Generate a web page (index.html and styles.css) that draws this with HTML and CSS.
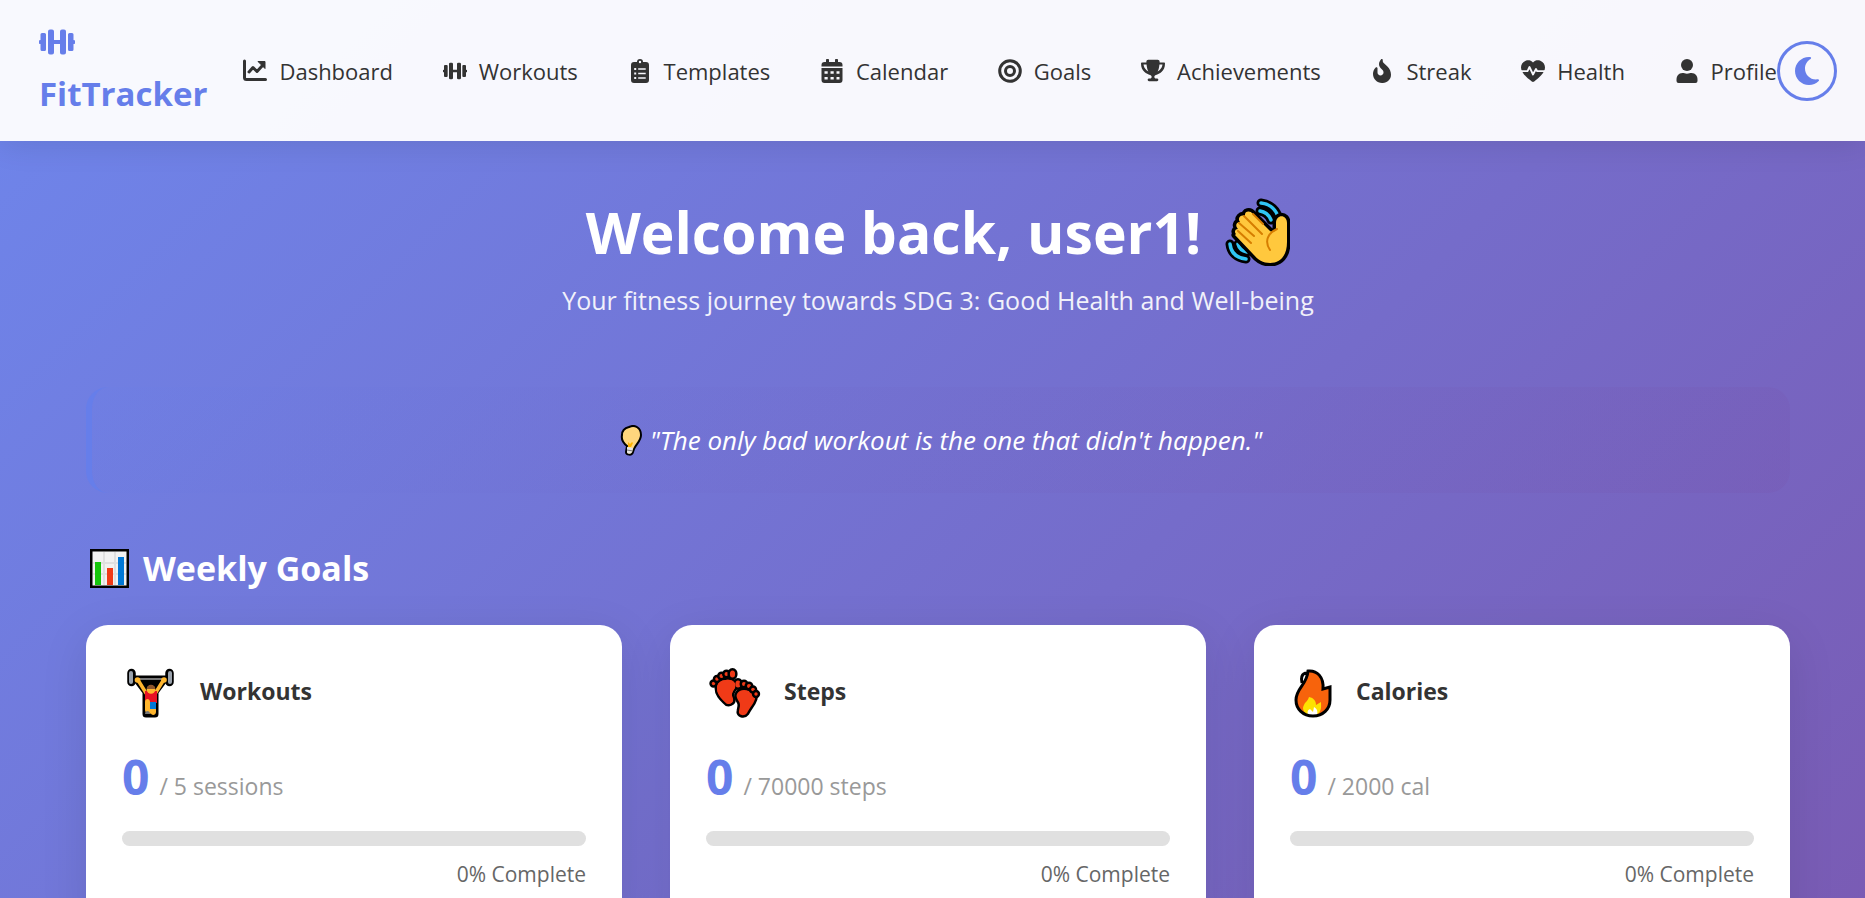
FILE: index.html
```html
<!DOCTYPE html>
<html lang="en">
<head>
<meta charset="utf-8">
<meta name="viewport" content="width=device-width, initial-scale=1">
<title>FitTracker</title>
<link rel="stylesheet" href="styles.css">
</head>
<body>
<svg class="defs" aria-hidden="true">
  <symbol id="dumbbell" viewBox="0 0 36 36">
    <path d="M9 7.500a2 2 0 0 1 2-2h2a2 2 0 0 1 2 2V16h6V7.500a2 2 0 0 1 2-2h2a2 2 0 0 1 2 2v21a2 2 0 0 1-2 2h-2a2 2 0 0 1-2-2V20h-6v8.500a2 2 0 0 1-2 2h-2a2 2 0 0 1-2-2zM1.500 16v-5.500a1.500 1.500 0 0 1 1.500-1.500h2.500a1.500 1.500 0 0 1 1.500 1.500v15a1.500 1.500 0 0 1-1.500 1.500h-2.500a1.500 1.500 0 0 1-1.500-1.500V20a2 2 0 0 1 0-4zM34.500 16v-5.500a1.500 1.500 0 0 0-1.500-1.500h-2.500a1.500 1.500 0 0 0-1.500 1.500v15a1.500 1.500 0 0 0 1.500 1.500h2.500a1.500 1.500 0 0 0 1.500-1.500V20a2 2 0 0 0 0-4z"/>
  </symbol>
</svg>

<header class="navbar">
  <a class="logo" href="#">
    <svg class="logo-icon" aria-hidden="true"><use href="#dumbbell"/></svg>
    <span>FitTracker</span>
  </a>
  <nav class="menu">
    <a href="#"><svg class="icon" viewBox="0 0 24 24" aria-hidden="true"><path d="M1.500 2v16.500a2 2 0 0 0 2 2H22.500" fill="none" stroke="currentColor" stroke-width="3" stroke-linecap="round"/><path d="M6 13l4-4.500 4 4L19.500 6.500" fill="none" stroke="currentColor" stroke-width="3" stroke-linecap="round" stroke-linejoin="round"/><path d="M15 2.500h7v7z" fill="currentColor" stroke="currentColor" stroke-linejoin="round"/></svg>Dashboard</a>
    <a href="#"><svg class="icon" aria-hidden="true"><use href="#dumbbell"/></svg>Workouts</a>
    <a href="#"><svg class="icon" viewBox="0 0 24 24" aria-hidden="true"><path fill-rule="evenodd" d="M6 3h3a3 3 0 0 1 6 0h3a3 3 0 0 1 3 3v15a3 3 0 0 1-3 3H6a3 3 0 0 1-3-3V6a3 3 0 0 1 3-3zm6-1.200a1.200 1.200 0 1 0 0 2.400 1.200 1.200 0 0 0 0-2.400zM6.200 9h2v2h-2zm4 .2h7.500v1.500h-7.500zM6.200 13.500h2v2h-2zm4 .2h7.500v1.500h-7.500zM6.200 18h2v2h-2zm4 .2h7.500v1.500h-7.500z"/></svg>Templates</a>
    <a href="#"><svg class="icon" viewBox="0 0 24 24" aria-hidden="true"><path fill-rule="evenodd" d="M6 1.200a1.500 1.500 0 0 1 3 0V3h6V1.200a1.500 1.500 0 0 1 3 0V3h1.500a3 3 0 0 1 3 3v1.500h-21V6a3 3 0 0 1 3-3H6zM1.500 9h21v12a3 3 0 0 1-3 3h-15a3 3 0 0 1-3-3zM4.500 12.200v2.600h3.200v-2.600zm6 0v2.600h3.200v-2.600zm6 0v2.600h3v-2.600zM4.500 18v2.600h3.200V18zm6 0v2.600h3.200V18zm6 0v2.600h3V18z"/></svg>Calendar</a>
    <a href="#"><svg class="icon" viewBox="0 0 24 24" aria-hidden="true"><g fill="none" stroke="currentColor" stroke-width="3"><circle cx="12" cy="12" r="10.300"/><circle cx="12" cy="12" r="4.500"/></g></svg>Goals</a>
    <a href="#"><svg class="icon" viewBox="0 -20 576 576" aria-hidden="true"><path d="M400 0H176c-26.500 0-48.100 21.800-47.100 48.200c.2 5.300 .4 10.600 .7 15.800H24C10.700 64 0 74.700 0 88c0 92.600 33.500 157 78.500 200.700c44.300 43.100 98.300 64.800 138.100 75.800c23.400 6.500 39.400 26 39.400 45.600c0 20.900-17 37.900-37.900 37.900H192c-17.700 0-32 14.300-32 32s14.300 32 32 32H384c17.700 0 32-14.300 32-32s-14.300-32-32-32H357.900C337 448 320 431 320 410.100c0-19.600 15.900-39.200 39.400-45.600c39.900-11 93.900-32.700 138.200-75.800C542.500 245 576 180.600 576 88c0-13.300-10.700-24-24-24H446.400c.3-5.200 .5-10.400 .7-15.800C448.100 21.800 426.500 0 400 0zM60 112h73.300c8 80 24 130 44 165c-20-10-36-20-50-35c-35-33-58-70-67.300-130zM448.700 242c-14 15-30 25-50 35c20-35 36-85 44-165H516c-9.300 60-32.300 97-67.300 130z"/></svg>Achievements</a>
    <a href="#"><svg class="icon" viewBox="0 0 384 512" aria-hidden="true"><path d="M153.600 29.900l16-21.300C173.600 3.200 180 0 186.700 0C198.400 0 208 9.600 208 21.300V43.500c0 13.100 5.400 25.700 14.900 34.700L307.600 159C356.400 205.600 384 270.200 384 337.700C384 434 306 512 209.700 512H192C86 512 0 426 0 320v-3.800c0-48.800 19.400-95.600 53.900-130.100l3.500-3.500c4.200-4.200 10-6.600 16-6.600C85.900 176 96 186.100 96 198.600V288c0 35.300 28.700 64 64 64s64-28.700 64-64v-3.900c0-18-7.200-35.300-19.900-48l-38.600-38.600c-24-24-37.500-56.700-37.500-90.700c0-27.700 9-54.800 25.600-76.900z"/></svg>Streak</a>
    <a href="#"><svg class="icon" viewBox="0 0 24 24" aria-hidden="true"><path d="M12 3.500C14 1.200 17 .9 19.300 1.800 22.500 3 24 6 24 8.500c0 5-6 10.500-10.800 14a2 2 0 0 1-2.400 0C6 19 0 13.500 0 8.500 0 6 1.500 3 4.700 1.800 7 .9 10 1.200 12 3.500z"/><path d="M0 12.200h6.500l2-4.200 3.500 7.500 3-5.500 1.200 2.200H24" fill="none" stroke="#f9f9fd" stroke-width="1.800" stroke-linejoin="round"/></svg>Health</a>
    <a href="#"><svg class="icon" viewBox="0 0 24 24" aria-hidden="true"><circle cx="12" cy="6" r="6"/><path d="M7.500 14c1.500 0 2.500.7 4.500.7s3-.7 4.500-.7c4 0 6 3 6 6.500v1.500a2 2 0 0 1-2 2h-17a2 2 0 0 1-2-2v-1.500c0-3.500 2-6.500 6-6.500z"/></svg>Profile</a>
  </nav>
  <button class="theme-toggle" type="button" aria-label="Toggle dark mode"><svg viewBox="0 0 384 512" aria-hidden="true"><path d="M223.500 32C100 32 0 132.300 0 256S100 480 223.500 480c60.600 0 115.500-24.200 155.800-63.400c5-4.900 6.300-12.500 3.100-18.700s-10.100-9.700-17-8.500c-9.800 1.700-19.800 2.600-30.100 2.600c-96.900 0-175.500-78.800-175.500-176c0-65.800 36-123.100 89.300-153.300c6.100-3.500 9.200-10.500 7.700-17.300s-7.300-11.900-14.300-12.500c-6.300-.5-12.600-.8-19-.8z"/></svg></button>
</header>

<main class="page">
  <section class="welcome">
    <h1>Welcome back, user1!
      <svg class="wave" viewBox="0 0 65 68" role="img" aria-label="Waving hand">
        <g fill="none" stroke-linecap="round">
          <g stroke="#000" stroke-width="9"><path d="M36 5c9 1 16 7 18 17M35 13c6 1 9 4 11 9M5 46c1 9 7 14 16 15M13 46c1 4 4 7 9 8"/></g>
          <g stroke="#30c5f4" stroke-width="3.500"><path d="M36 5c9 1 16 7 18 17M35 13c6 1 9 4 11 9M5 46c1 9 7 14 16 15M13 46c1 4 4 7 9 8"/></g>
        </g>
        <path d="M11 36c-2-2-1-5 2-5-3-3-2-7 2-7-3-4 1-8 5-6-1-5 5-6 8-2l17 17c3 2 6 0 6-3v-5c0-9 11-9 11 0v19c0 14-7 21-17 21-7 0-12-3-17-9L10 37z" fill="#ffc83d" stroke="#000" stroke-width="7" stroke-linejoin="round" paint-order="stroke"/>
        <path d="M13 33l13 12M14 25l15 13M19 18l18 18M28 16l10 10M52 31c-9 4-13 12-7 21" fill="none" stroke="#d67d00" stroke-width="2" stroke-linecap="round"/>
      </svg>
    </h1>
    <p>Your fitness journey towards SDG 3: Good Health and Well-being</p>
  </section>

  <section class="quote">
    <svg class="bulb" viewBox="0 0 22 31" role="img" aria-label="Light bulb"><path d="M9 2c6-3 12 1 12 8 0 6-5 9-7 14l-1 3c-1 4-7 3-7 0l1-6c-4-3-6-6-5-11 0-4 3-7 7-8z" fill="#ffd67d" stroke="#000" stroke-width="2"/><path d="M7 22l6 1-1 4c-1 2-5 2-5 0z" fill="#e6e6e6"/><path d="M7 25l6 1" stroke="#777"/><path d="M8 17l2 2 2-2 1 1-2 4H8z" fill="#ffb300"/></svg>
    <q>The only bad workout is the one that didn't happen.</q>
  </section>

  <section class="goals">
    <h2>
      <svg class="chart" viewBox="0 0 39 39" role="img" aria-label="Bar chart"><path d="M1 1h37v37H1z" fill="#f2f2f2" stroke="#000" stroke-width="3"/><path d="M14 3v33M25 3v33M3 14h33M3 25h33" stroke="#e0e0e0" stroke-width="2"/><path d="M5 13h6v23H5z" fill="#16c60c"/><path d="M17 19h6v17h-6z" fill="#f03a17"/><path d="M28 8h6v28h-6z" fill="#0078d7"/></svg>
      Weekly Goals
    </h2>
    <div class="cards">
      <article class="card">
        <h3>
          <svg class="emoji emoji-wide" viewBox="-2 0 60 60" role="img" aria-label="Weight lifter">
            <path d="M8 18h37" stroke="#000" stroke-width="7"/>
            <path d="M7.500 12v9M45.500 12v9" stroke="#000" stroke-width="8.500" stroke-linecap="round"/>
            <path d="M13 19l9 12v22h9V31l9-12" fill="#000" stroke="#000" stroke-width="7" stroke-linejoin="round"/>
            <path d="M7 12v9M46 12v9" stroke="#9aa2ac" stroke-width="4" stroke-linecap="round"/>
            <path d="M12 18h29" stroke="#777" stroke-width="2"/>
            <path d="M14 19l8 13M39.500 19l-8 13" fill="none" stroke="#ffb62e" stroke-width="3.500" stroke-linecap="round"/>
            <circle cx="13.500" cy="19" r="2.800" fill="#ffb62e"/><circle cx="40" cy="19" r="2.800" fill="#ffb62e"/>
            <path d="M21 30h12v12H21z" fill="#e81224"/>
            <circle cx="27" cy="28.500" r="4.300" fill="#ffb62e"/><path d="M22.700 28a4.300 4.300 0 0 1 8.600 0z" fill="#8e562e"/>
            <path d="M21 41c0-4 5-4 5 0v6h6v4c0 3-4 4-5 1.500-3 1-6-.5-6-3.500z" fill="#ffb62e"/>
            <path d="M26 41h6v7h-6z" fill="#0078d7"/><path d="M21 53c0-4 5-4 5 0z" fill="#777"/>
          </svg>
          Workouts
        </h3>
        <p class="count"><strong>0</strong> <span>/ 5 sessions</span></p>
        <progress max="100" value="0" aria-label="Workouts progress"></progress>
        <p class="percent">0% Complete</p>
      </article>
      <article class="card">
        <h3>
          <svg class="emoji emoji-wide" viewBox="-2 -3 60 60" role="img" aria-label="Footprints">
            <g stroke="#000" stroke-width="5" fill="#f03a17" stroke-linejoin="round" paint-order="stroke">
              <path d="M9 24c0-5 4-8 9-8 7-1 11 3 9 8-3 4-4 6-2 11 1 4-5 7-8 3-4-4-8-8-8-14z"/>
              <circle cx="5.500" cy="19.500" r="1.700"/><circle cx="9" cy="15" r="1.800"/><circle cx="13.500" cy="12" r="2"/><circle cx="18.500" cy="10" r="2"/><ellipse cx="24.500" cy="10" rx="2.600" ry="3.600"/>
              <path d="M29 30c2-4 7-5 12-3 5 1 7 4 6 8-2 6-5 8-8 14-3 4-9 2-8-2 1-5 2-7-1-11-1-2-2-4-1-6z"/>
              <ellipse cx="30" cy="20" rx="2.600" ry="3.600"/><circle cx="36" cy="20" r="2"/><circle cx="41" cy="22" r="2"/><circle cx="45" cy="25.500" r="1.800"/><circle cx="48" cy="30" r="1.700"/>
            </g>
            <g fill="#f03a17"><path d="M9 24c0-5 4-8 9-8 7-1 11 3 9 8-3 4-4 6-2 11 1 4-5 7-8 3-4-4-8-8-8-14z"/></g>
          </svg>
          Steps
        </h3>
        <p class="count"><strong>0</strong> <span>/ 70000 steps</span></p>
        <progress max="100" value="0" aria-label="Steps progress"></progress>
        <p class="percent">0% Complete</p>
      </article>
      <article class="card">
        <h3>
          <svg class="emoji" viewBox="0 0 48 60" role="img" aria-label="Fire">
            <path d="M18 10c9-1 16 6 15 18l7-2v13c0 9-7 16-17 16C13 55 6 48 6 39c0-12 11-15 12-29z" fill="#f7630c"/>
            <path d="M18 54c-5-3-6-7-4-10 1-3 4-4 5-8 5 1 7 4 7 8l5-3c0 4 1 8-3 12z" fill="#fde101"/>
            <path d="M18 54c-1-4 0-5 2-6l3 3 1-5c3 2 4 4 3 8z" fill="#fff"/>
            <path d="M18 10c9-1 16 6 15 18l7-2v13c0 9-7 16-17 16C13 55 6 48 6 39c0-12 11-15 12-29zm-1 2c-6 0-6 6-5 10" fill="none" stroke="#000" stroke-width="3"/>
          </svg>
          Calories
        </h3>
        <p class="count"><strong>0</strong> <span>/ 2000 cal</span></p>
        <progress max="100" value="0" aria-label="Calories progress"></progress>
        <p class="percent">0% Complete</p>
      </article>
    </div>
  </section>
</main>
</body>
</html>
```
FILE: styles.css
```css
* {
  box-sizing: border-box;
  margin: 0;
  padding: 0;
}

body {
  min-height: 170vh;
  font-family: "Open Sans", "Noto Sans", sans-serif;
  font-size: 22px;
  line-height: 36px;
  color: #333;
  background: linear-gradient(135deg, #6e86ec 0%, #7c52a8 100%);
}

.defs {
  position: absolute;
  width: 0;
  height: 0;
}

.navbar {
  display: flex;
  align-items: center;
  padding: 12px 28px 12px 39px;
  background: rgba(255, 255, 255, 0.95);
  box-shadow: 0 3px 30px rgba(0, 0, 0, 0.1);
}

.logo {
  display: flex;
  flex-direction: column;
  margin-right: 36px;
  padding: 12px 0 8px;
  font-size: 33px;
  font-weight: 700;
  line-height: 54px;
  color: #667eea;
  text-decoration: none;
}

.logo-icon {
  width: 36px;
  height: 36px;
  margin-bottom: 7px;
  fill: currentColor;
}

.menu {
  flex: 1;
  display: flex;
  justify-content: space-between;
}

.menu a {
  display: flex;
  align-items: center;
  gap: 12px;
  color: #333;
  text-decoration: none;
}

.icon {
  width: 24px;
  height: 24px;
  fill: currentColor;
}

.theme-toggle {
  display: flex;
  align-items: center;
  justify-content: center;
  width: 60px;
  height: 60px;
  border: 3px solid #667eea;
  border-radius: 50%;
  background: transparent;
  color: #667eea;
}

.theme-toggle svg {
  height: 32px;
  fill: currentColor;
}

.page {
  padding: 46px 75px 48px 86px;
}

.welcome {
  margin-bottom: 66px;
  text-align: center;
  color: #fff;
}

.welcome h1 {
  display: flex;
  align-items: center;
  justify-content: center;
  gap: 24px;
  margin-bottom: 2px;
  font-size: 57px;
  line-height: 90px;
}

.wave {
  width: 65px;
  height: 68px;
}

.welcome p {
  font-size: 25px;
  line-height: 42px;
  opacity: 0.9;
}

.quote {
  display: flex;
  align-items: center;
  justify-content: center;
  gap: 8px;
  margin-bottom: 48px;
  padding: 32px;
  border-left: 6px solid #667eea;
  border-radius: 22px;
  background: linear-gradient(135deg, rgba(102, 126, 234, 0.1), rgba(118, 75, 162, 0.15));
  color: #fff;
  font-size: 26px;
  font-style: italic;
  line-height: 42px;
}

.quote q {
  quotes: '"' '"';
}

.bulb {
  width: 22px;
  height: 31px;
}

.goals h2 {
  display: flex;
  align-items: center;
  gap: 14px;
  margin-bottom: 30px;
  padding-left: 4px;
  color: #fff;
  font-size: 34px;
  line-height: 54px;
}

.chart {
  width: 39px;
  height: 39px;
}

.cards {
  display: grid;
  grid-template-columns: repeat(3, 1fr);
  gap: 48px;
}

.card {
  padding: 36px;
  border-radius: 22px;
  background: #fff;
  box-shadow: 0 12px 48px rgba(0, 0, 0, 0.1);
}

.card h3 {
  display: flex;
  align-items: center;
  gap: 18px;
  margin-bottom: 20px;
  font-size: 23px;
  line-height: 60px;
}

.emoji {
  width: 48px;
  height: 60px;
}

.emoji-wide {
  width: 60px;
}

.count {
  margin-bottom: 9px;
  color: #999;
  font-size: 23px;
  line-height: 72px;
}

.count strong {
  margin-right: 4px;
  color: #667eea;
  font-size: 48px;
}

.card progress {
  display: block;
  width: 100%;
  height: 15px;
  border: 0;
  border-radius: 8px;
  overflow: hidden;
  appearance: none;
  background: #e0e0e0;
}

.card progress::-webkit-progress-bar {
  background: #e0e0e0;
}

.card progress::-webkit-progress-value {
  background: #667eea;
}

.percent {
  margin-top: 10px;
  color: #666;
  font-size: 21px;
  text-align: right;
}
```
